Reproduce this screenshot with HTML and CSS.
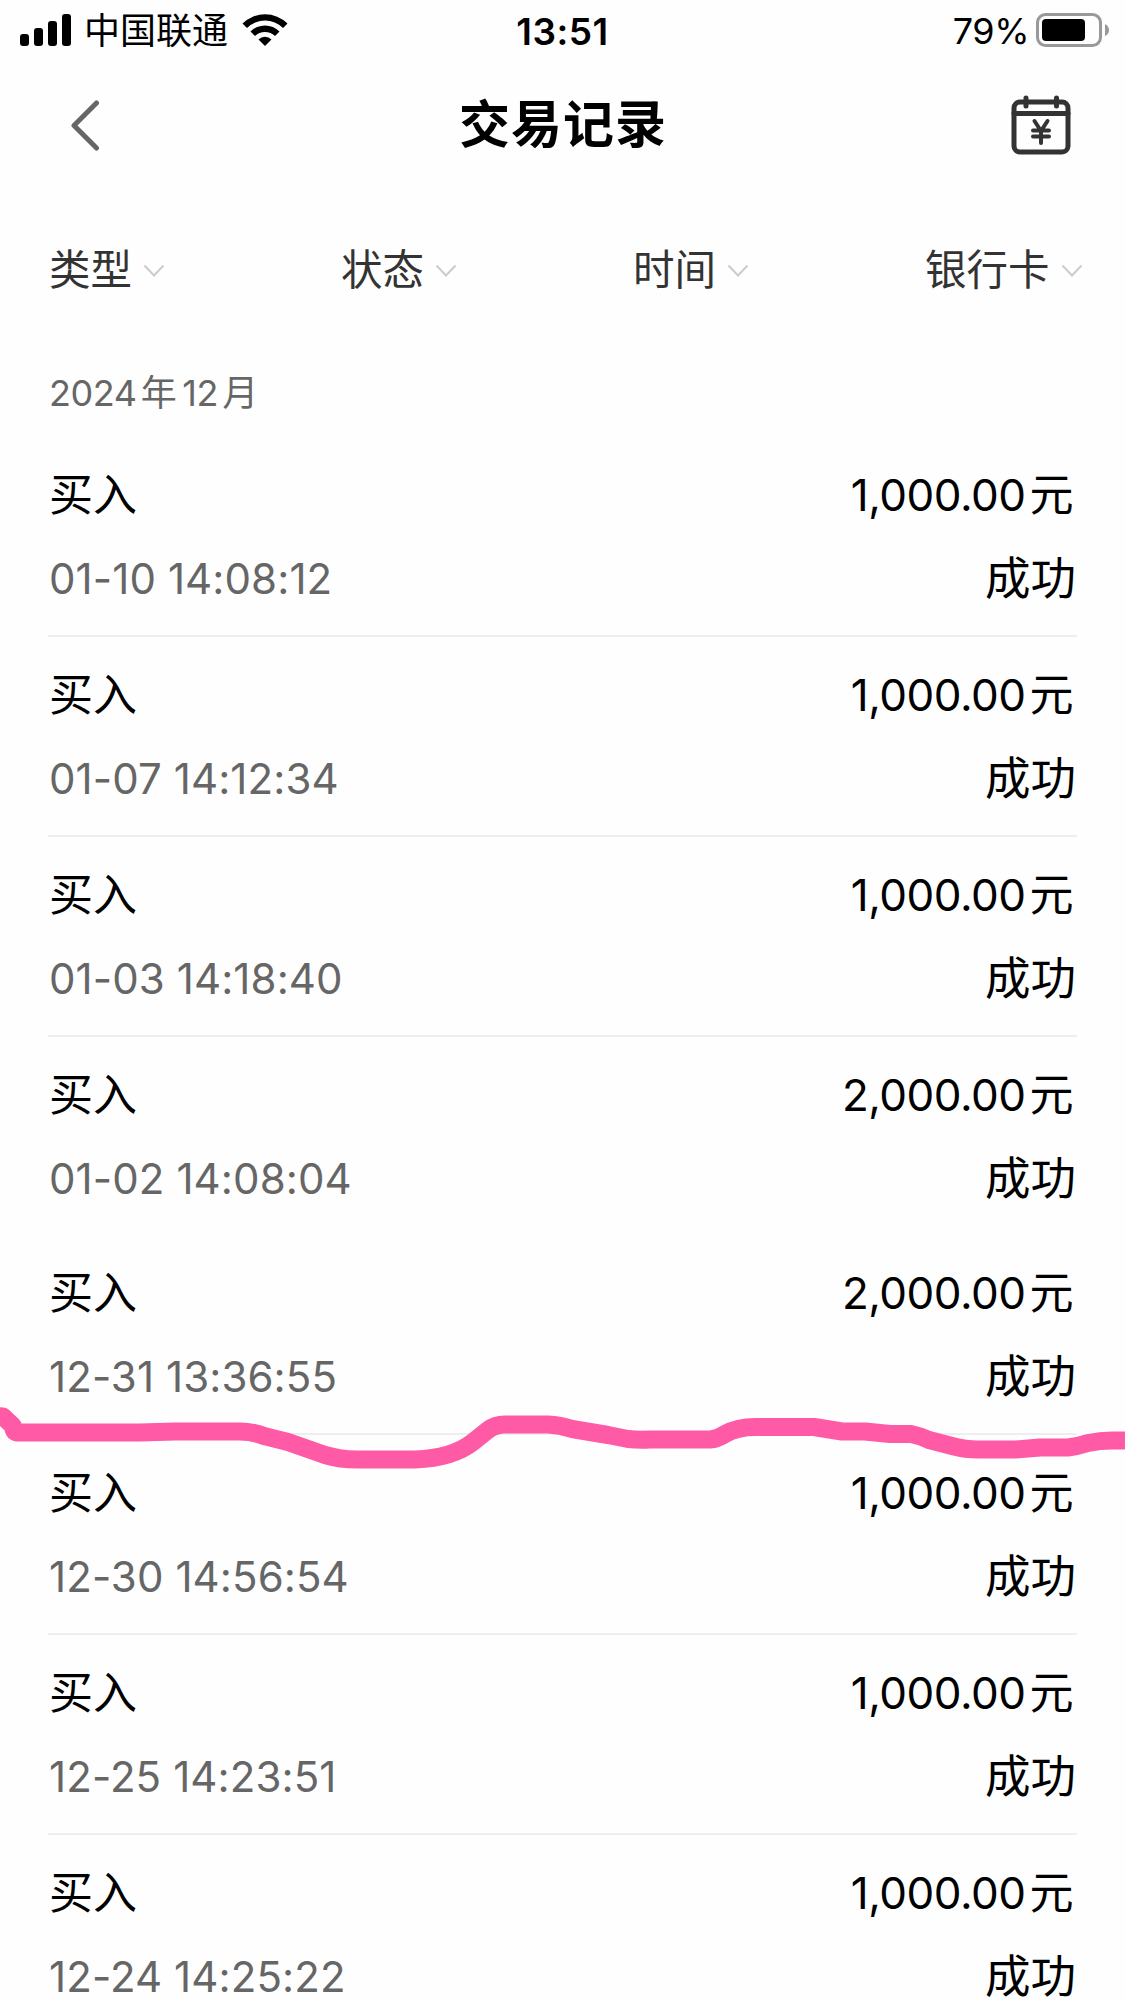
FILE: index.html
```
<!DOCTYPE html>
<html lang="zh-CN">
<head>
	<meta charset="utf-8">
	<title>交易记录</title>
	<link rel="stylesheet" href="styles.css">
</head>
<body>

<div class="page">

	<div class="status-bar">
		<div class="carrier">
			<svg class="signal" width="51" height="32" viewBox="0 0 51 32">
				<rect x="0" y="20" width="9" height="12" rx="3"/>
				<rect x="14" y="14" width="9" height="18" rx="3"/>
				<rect x="28" y="7" width="9" height="25" rx="3"/>
				<rect x="42" y="0" width="9" height="32" rx="3"/>
			</svg>
			<span class="carrier-name">中国联通</span>
			<svg class="wifi" width="46" height="34" viewBox="0 0 46 34">
				<path d="M0.5 10.5 A32 32 0 0 1 45.500 10.500 L41 15 A25.500 25.500 0 0 0 5 15 Z"/>
				<path d="M8.500 18.500 A20.500 20.500 0 0 1 37.500 18.500 L33 23 A14.200 14.200 0 0 0 13 23 Z"/>
				<path d="M16.500 26.500 A9.200 9.200 0 0 1 29.500 26.500 L23 33 Z"/>
			</svg>
		</div>
		<div class="clock">13:51</div>
		<div class="power">
			<span>79%</span>
			<svg class="battery" width="74" height="34" viewBox="0 0 74 34">
				<rect class="shell" x="1.500" y="1.500" width="63" height="31" rx="8"/>
				<rect x="6" y="6" width="43" height="22" rx="4"/>
				<path class="nub" d="M69 11 Q73 13 73 17 Q73 21 69 23 Z"/>
			</svg>
		</div>
	</div>

	<div class="header">
		<svg class="back" width="30" height="54" viewBox="0 0 30 54">
			<path d="M26.500 5 L4 27.500 L26.500 50"/>
		</svg>
		<h1>交易记录</h1>
		<svg class="calendar" width="60" height="60" viewBox="0 0 60 60">
			<rect x="3" y="7" width="54" height="50" rx="6"/>
			<path d="M3 18.500 H57"/>
			<path d="M15 3 V11 M45.500 3 V11"/>
			<path class="yen" d="M23.500 26 L30 36 L36.500 26 M30 36 V48 M22 35.500 H38 M22 41.500 H38"/>
		</svg>
	</div>

	<div class="filters">
		<div class="filter">类型<svg width="22" height="14" viewBox="0 0 22 14"><path d="M1.500 1.500 L11 11.500 L20.500 1.500"/></svg></div>
		<div class="filter">状态<svg width="22" height="14" viewBox="0 0 22 14"><path d="M1.500 1.500 L11 11.500 L20.500 1.500"/></svg></div>
		<div class="filter">时间<svg width="22" height="14" viewBox="0 0 22 14"><path d="M1.500 1.500 L11 11.500 L20.500 1.500"/></svg></div>
		<div class="filter">银行卡<svg width="22" height="14" viewBox="0 0 22 14"><path d="M1.500 1.500 L11 11.500 L20.500 1.500"/></svg></div>
	</div>

	<div class="month">2024<span class="year">年</span>12<span class="mon">月</span></div>

	<ul class="records">
		<li>
			<div class="line"><span class="type">买入</span><span class="amount">1,000.00<i>元</i></span></div>
			<div class="line"><span class="time">01-10 14:08:12</span><span class="state">成功</span></div>
		</li>
		<li>
			<div class="line"><span class="type">买入</span><span class="amount">1,000.00<i>元</i></span></div>
			<div class="line"><span class="time">01-07 14:12:34</span><span class="state">成功</span></div>
		</li>
		<li>
			<div class="line"><span class="type">买入</span><span class="amount">1,000.00<i>元</i></span></div>
			<div class="line"><span class="time">01-03 14:18:40</span><span class="state">成功</span></div>
		</li>
		<li class="last">
			<div class="line"><span class="type">买入</span><span class="amount">2,000.00<i>元</i></span></div>
			<div class="line"><span class="time">01-02 14:08:04</span><span class="state">成功</span></div>
		</li>
	</ul>

	<ul class="records">
		<li class="marked">
			<div class="line"><span class="type">买入</span><span class="amount">2,000.00<i>元</i></span></div>
			<div class="line"><span class="time">12-31 13:36:55</span><span class="state">成功</span></div>
			<!-- hand drawn marker -->
			<svg class="marker" width="1125" height="80" viewBox="0 1400 1125 80">
				<path d="M-4 1416 L3 1416.500 L13 1426 Q13 1432 17 1432.500 H140 L175 1431.500 H240 Q252 1431.500 264 1436 L288 1442 L325 1455 Q342 1460 360 1459.500 H415 Q453 1458 473 1442 L488 1430 Q496 1424 506 1424.500 H548 Q560 1425 572 1429 L608 1435 L628 1439 Q638 1440 650 1439.500 H710 Q717 1439 725 1434 Q738 1427 755 1427 H814 L842 1431.500 H865 L890 1434 H911 Q921 1436 929 1440 L952 1446 Q968 1450 980 1449.500 H1015 L1040 1447.500 H1068 Q1077 1446.500 1088 1443 Q1100 1440.500 1112 1440.500 H1135"/>
			</svg>
		</li>
		<li>
			<div class="line"><span class="type">买入</span><span class="amount">1,000.00<i>元</i></span></div>
			<div class="line"><span class="time">12-30 14:56:54</span><span class="state">成功</span></div>
		</li>
		<li>
			<div class="line"><span class="type">买入</span><span class="amount">1,000.00<i>元</i></span></div>
			<div class="line"><span class="time">12-25 14:23:51</span><span class="state">成功</span></div>
		</li>
		<li>
			<div class="line"><span class="type">买入</span><span class="amount">1,000.00<i>元</i></span></div>
			<div class="line"><span class="time">12-24 14:25:22</span><span class="state">成功</span></div>
		</li>
	</ul>

</div>

</body>
</html>
```
FILE: styles.css
```
* {box-sizing: border-box;}

body {
	margin: 0;
	background: #fefefe;
	color: #000;
	font-family: Inter, "Noto Sans CJK SC", sans-serif;
}

.page {
	width: 1125px;
	height: 2001px;
	overflow: hidden;
}

svg {
	display: block;
	flex: none;
}

/* STATUS BAR */
.status-bar {
	display: grid;
	grid-template-columns: 1fr auto 1fr;
	align-items: center;
	height: 60px;
	padding: 0 15px;
	font-size: 36px;
}

.carrier,
.power {
	display: flex;
	align-items: center;
}

.carrier {
	padding-left: 5px;
}
.carrier-name {
	margin: 0 14px 0 13px;
	padding-top: 3px;
	font-size: 36px;
	line-height: 57px;
}

.clock {
	font-weight: 600;
	font-size: 37px;
	letter-spacing: 0.5px;
	padding-top: 2px;
}

.power {
	justify-content: flex-end;
}
.power span {
	padding-top: 2px;
	margin-right: 7px;
	letter-spacing: -0.5px;
}

.battery .shell {
	fill: none;
	stroke: #999;
	stroke-width: 3;
}
.battery .nub {
	fill: #999;
}

/* HEADER */
.header {
	display: flex;
	align-items: center;
	justify-content: space-between;
	height: 130px;
	padding: 0 54px 0 70px;
}

.header h1 {
	margin: 0 0 0 15px;
	font-size: 51px;
	font-weight: 600;
	line-height: 130px;
	letter-spacing: 1px;
}

.header svg {
	fill: none;
	stroke-linecap: round;
	stroke-linejoin: round;
}
.back {
	stroke: #666;
	stroke-width: 5;
}
.calendar {
	stroke: #333;
	stroke-width: 5;
}
.calendar .yen {
	stroke-width: 4;
}

/* FILTERS */
.filters {
	display: grid;
	grid-template-columns: repeat(4, 292px);
	height: 154px;
	margin-bottom: 5px;
	padding-left: 49px;
}

.filter {
	display: flex;
	align-items: center;
	color: #333;
	font-size: 41.5px;
}
.filter svg {
	margin: 7px 0 0 11px;
	fill: none;
	stroke: #ccc;
	stroke-width: 2;
}

.month {
	height: 88px;
	padding-left: 49px;
	color: #666;
	font-size: 36px;
	line-height: 88px;
	letter-spacing: -0.4px;
}
.month .year {
	margin: 0 6px 0 4px;
}
.month .mon {
	margin-left: 4px;
}

/* RECORDS */
.records {
	margin: 0;
	padding: 0 48px;
	list-style: none;
}

.records li {
	height: 200px;
	padding-top: 16px;
	border-bottom: 2px solid #eee;
}
.records li.last {
	height: 198px;
	border-bottom: none;
}

.line {
	display: flex;
	justify-content: space-between;
	height: 84px;
	padding-left: 1px;
	line-height: 84px;
	font-size: 44px;
}

.time {
	color: #666;
	font-size: 42px;
	letter-spacing: 0.1px;
}

.state {
	font-size: 45.5px;
	padding-right: 1px;
}

.amount {
	padding-right: 4px;
	letter-spacing: -0.5px;
}
.amount i {
	font-style: normal;
	margin-left: 4px;
}

.marked {
	position: relative;
}
.marker {
	position: absolute;
	left: -48px;
	top: 165px;
	fill: none;
	stroke: #ff5aa5;
	stroke-width: 18;
	stroke-linecap: round;
	stroke-linejoin: round;
}
```
